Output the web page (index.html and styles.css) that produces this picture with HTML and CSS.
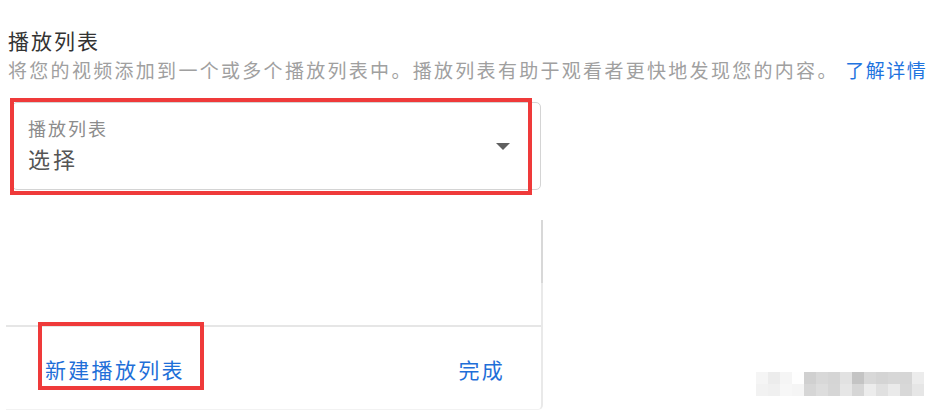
FILE: index.html
```html
<!DOCTYPE html>
<html>
<head>
  <title>播放列表</title>
  <meta charset="utf-8">
  <link rel="stylesheet" href="styles.css">
</head>
<body>
  <div class="page">
    <div class="title">播放列表</div><!--标题-->
    <div class="desc">将您的视频添加到一个或多个播放列表中。播放列表有助于观看者更快地发现您的内容。 <a class="link">了解详情</a></div>

    <div class="selectWrap">
      <div class="select">
        <div class="selectText">
          <div class="label">播放列表</div>
          <div class="value">选择</div>
        </div>
        <div class="arrow"></div>
      </div>
      <div class="mark markSelect"></div><!--红框-->
    </div>

    <div class="panel">
      <div class="list">
        <div class="thumb"></div>
      </div>
      <div class="footer">
        <a class="btn">新建播放列表</a>
        <a class="btn">完成</a>
        <div class="mark markNew"></div><!--红框-->
      </div>
    </div>
  </div>

  <div class="water">
    <div class="cell" style="background:#f5f5f5"></div>
    <div class="cell" style="background:#ececec"></div>
    <div class="cell" style="background:#f5f5f5"></div>
    <div class="cell" style="background:#fefefe"></div>
    <div class="cell" style="background:#d0d0d0"></div>
    <div class="cell" style="background:#d8d8d8"></div>
    <div class="cell" style="background:#d5d5d5"></div>
    <div class="cell" style="background:#e2e2e2"></div>
    <div class="cell" style="background:#c4c4c4"></div>
    <div class="cell" style="background:#d8d8d8"></div>
    <div class="cell" style="background:#d4d4d4"></div>
    <div class="cell" style="background:#d7d7d7"></div>
    <div class="cell" style="background:#d6d6d6"></div>
    <div class="cell" style="background:#ececec"></div>
    <div class="cell" style="background:#f2f2f2"></div>
    <div class="cell" style="background:#f0f0f0"></div>
    <div class="cell" style="background:#f7f7f7"></div>
    <div class="cell" style="background:#f5f5f5"></div>
    <div class="cell" style="background:#d6d6d6"></div>
    <div class="cell" style="background:#dddddd"></div>
    <div class="cell" style="background:#d6d6d6"></div>
    <div class="cell" style="background:#e6e6e6"></div>
    <div class="cell" style="background:#d6d6d6"></div>
    <div class="cell" style="background:#ececec"></div>
    <div class="cell" style="background:#e0e0e0"></div>
    <div class="cell" style="background:#eaeaea"></div>
    <div class="cell" style="background:#d8d8d8"></div>
    <div class="cell" style="background:#e6e6e6"></div>
  </div>
</body>
</html>
```

FILE: styles.css
```css
html, body {
  margin: 0;
  padding: 0;
}
body {
  position: relative;
  width: 944px;
  height: 420px;
  overflow: hidden;
  background: #fff;
  font-family: "Noto Sans CJK SC", "Noto Sans", sans-serif;
}

.page {
  padding: 28px 0 0 8px;
}

.title {
  font-size: 21px;
  line-height: 24px;
  letter-spacing: 2px;
  color: #333;
}
.desc {
  margin-top: 6px;
  font-size: 19px;
  line-height: 24px;
  letter-spacing: 2.3px;
  color: #a0a0a0;
  white-space: nowrap;
}
.link {
  color: #1f74e0;
  letter-spacing: 1.5px;
}

/* 下拉框 */
.selectWrap {
  position: relative;
  width: 529px;
  margin: 20px 0 0 4px;
}
.select {
  display: flex;
  align-items: center;
  height: 86px;
  padding: 0 30px 0 15px;
  border: 1px solid #d4d4d4;
  border-radius: 5px;
}
.selectText {
  flex: 1;
  padding-bottom: 4px;
}
.label {
  font-size: 18px;
  line-height: 22px;
  letter-spacing: 2px;
  color: #8c8c8c;
}
.value {
  margin-top: 6px;
  font-size: 22px;
  line-height: 26px;
  letter-spacing: 3px;
  color: #555;
}
.arrow {
  width: 0;
  height: 0;
  border-left: 7px solid transparent;
  border-right: 7px solid transparent;
  border-top: 7px solid #606060;
}

/* 红色标注框 */
.mark {
  position: absolute;
  box-sizing: border-box;
  border: 4px solid #ef3a3a;
}
.markSelect {
  left: -2px;
  top: -4px;
  width: 522px;
  height: 97px;
}
.markNew {
  left: 32px;
  top: -5px;
  width: 166px;
  height: 68px;
}

/* 底部面板 */
.panel {
  width: 535px;
  margin: 30px 0 0 -2px;
  border-right: 2px solid #e9e9e9;
  border-bottom: 1px solid #f2f2f2;
  border-bottom-right-radius: 5px;
}
.list {
  position: relative;
  height: 105px;
  border-bottom: 2px solid #e6e6e6;
}
.thumb {
  position: absolute;
  right: -2px;
  top: 0;
  width: 2px;
  height: 63px;
  background: #d8d8d8;
}
.footer {
  position: relative;
  display: flex;
  justify-content: space-between;
  align-items: center;
  height: 82px;
  padding: 0 36px 0 39px;
}
.btn {
  font-size: 21px;
  line-height: 26px;
  letter-spacing: 2.3px;
  color: #1f6fd8;
  padding-top: 2px;
}

/* 水印 */
.water {
  position: absolute;
  left: 756px;
  top: 372px;
  width: 168px;
  display: flex;
  flex-wrap: wrap;
}
.cell {
  width: 12px;
  height: 12px;
}
```
